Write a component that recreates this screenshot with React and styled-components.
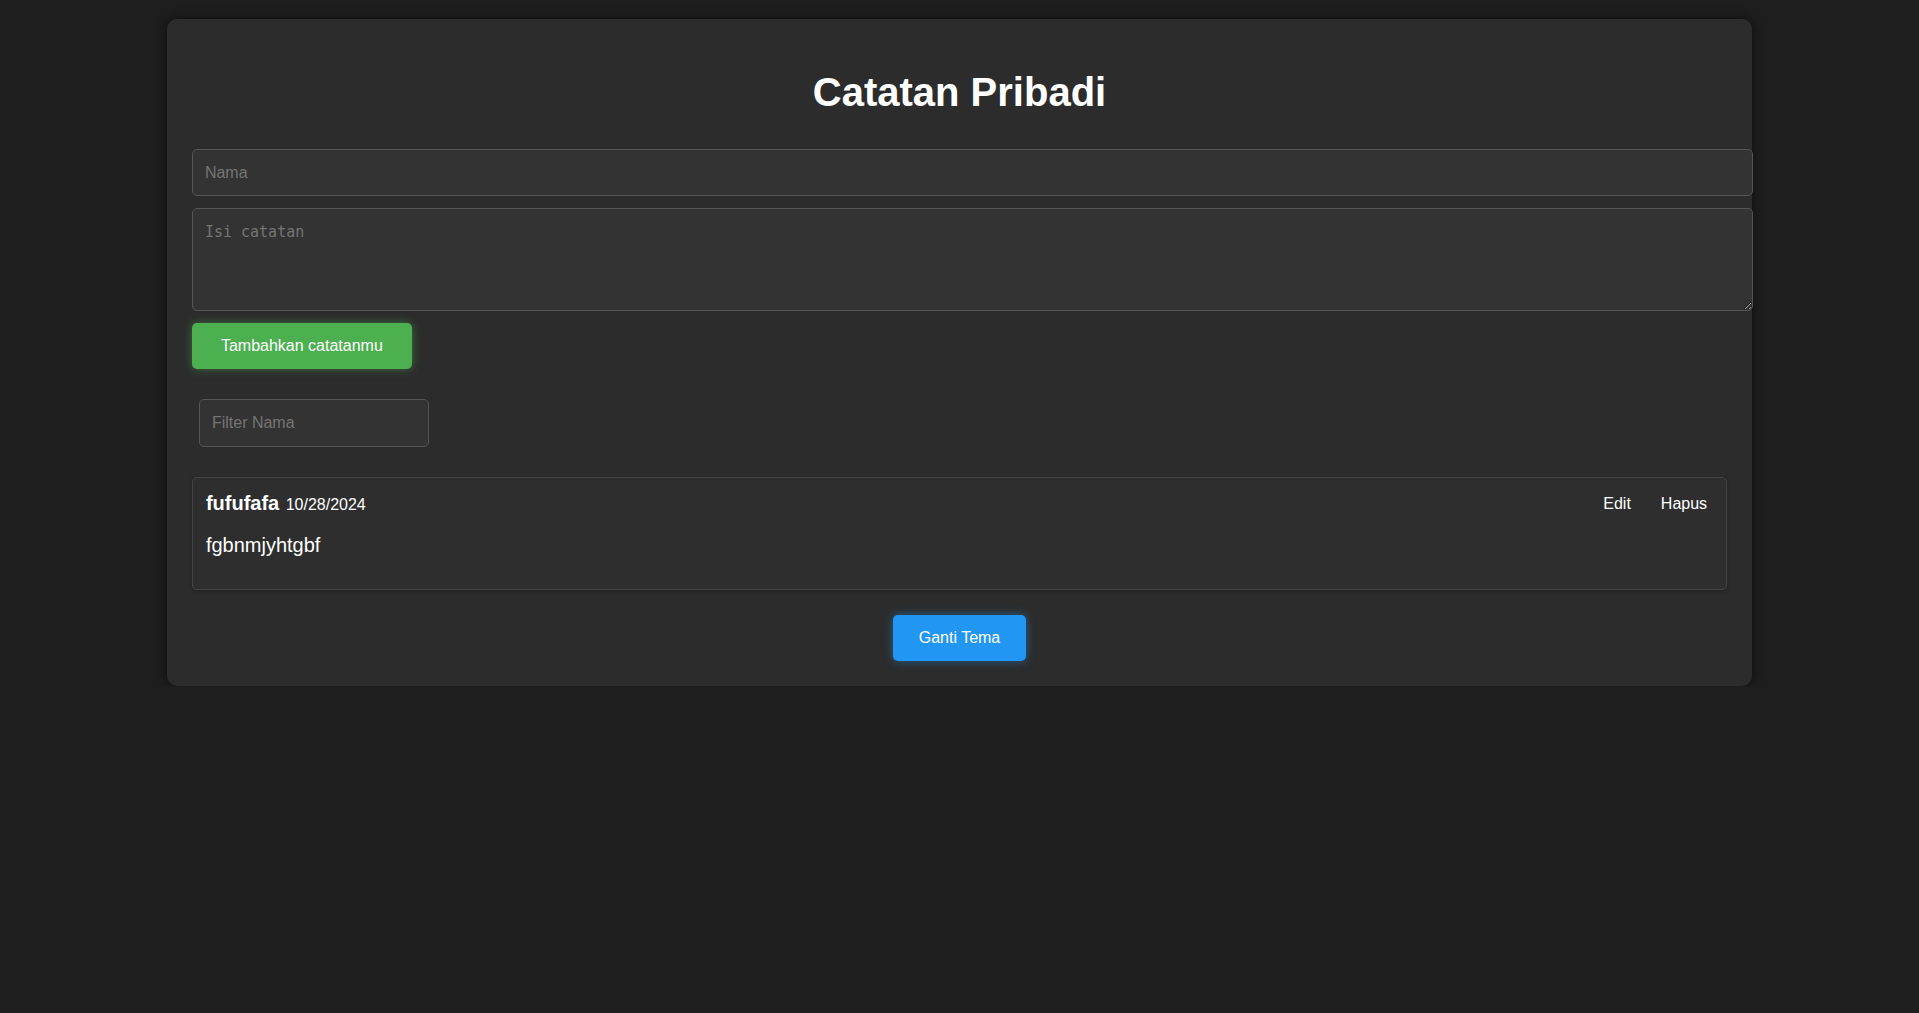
import React, { useState } from "react";
import styled, { createGlobalStyle } from "styled-components";

const GlobalStyle = createGlobalStyle`
  html, body {
    background-color: #1e1e1e;
  }
  body {
    margin: 0;
    font-family: "Liberation Sans", Arial, sans-serif;
    color: #ffffff;
  }
`;

const initialNotes = [
  { id: 1, name: "fufufafa", date: "10/28/2024", body: "fgbnmjyhtgbf" },
];

function App() {
  const [notes] = useState(initialNotes);
  const [filter, setFilter] = useState("");

  const shown = notes.filter((n) =>
    n.name.toLowerCase().includes(filter.toLowerCase())
  );

  return (
    <>
      <GlobalStyle />
      <Container>
        <Title>Catatan Pribadi</Title>
        <NoteForm onSubmit={(e) => e.preventDefault()}>
          <TextInput type="text" placeholder="Nama" />
          <TextArea placeholder="Isi catatan" />
          <ActionButton type="submit" $color="76, 175, 80" $px={29}>
            Tambahkan catatanmu
          </ActionButton>
        </NoteForm>
        <FilterInput
          type="text"
          placeholder="Filter Nama"
          value={filter}
          onChange={(e) => setFilter(e.target.value)}
        />
        <NoteList>
          {shown.map((note) => (
            <NoteCard key={note.id}>
              <NoteHeader>
                <NoteMeta>
                  <NoteName>{note.name}</NoteName> <NoteDate>{note.date}</NoteDate>
                </NoteMeta>
                <NoteActions>
                  <TextButton>Edit</TextButton>
                  <TextButton>Hapus</TextButton>
                </NoteActions>
              </NoteHeader>
              <NoteBody>{note.body}</NoteBody>
            </NoteCard>
          ))}
        </NoteList>
        <Footer>
          <ActionButton $color="33, 150, 243" $px={26}>
            Ganti Tema
          </ActionButton>
        </Footer>
      </Container>
    </>
  );
}
export default App;

const Container = styled.div`
  width: 80vw;
  margin: 19px auto 0;
  padding: 25px;
  background-color: #2c2c2c;
  border-radius: 10px;
  box-shadow: 0 0 12px rgba(0, 0, 0, 0.6);
`;

const Title = styled.h1`
  margin: 26px 0 34px;
  font-size: 40px;
  font-weight: 700;
  text-align: center;
  color: #ffffff;
`;

const NoteForm = styled.form`
  display: flex;
  flex-direction: column;
  align-items: flex-start;
  gap: 12px;
`;

const fieldStyle = `
  background-color: #333333;
  border: 1px solid #555555;
  border-radius: 5px;
  color: #ffffff;
  outline: 0;
`;

const TextInput = styled.input`
  ${fieldStyle}
  width: 100%;
  box-sizing: content-box;
  padding: 13px 12px;
  font-family: "Liberation Sans", Arial, sans-serif;
  font-size: 16px;
  line-height: 19px;
  &::placeholder {
    color: #757575;
  }
`;

const TextArea = styled.textarea`
  ${fieldStyle}
  width: 100%;
  height: 77px;
  box-sizing: content-box;
  padding: 14px 12px 10px;
  font-family: "DejaVu Sans Mono", "Liberation Mono", monospace;
  font-size: 15px;
  &::placeholder {
    color: #757575;
  }
`;

const ActionButton = styled.button`
  border: none;
  border-radius: 5px;
  padding: 14px ${(p) => p.$px}px;
  font-family: "Liberation Sans", Arial, sans-serif;
  font-size: 16px;
  line-height: 18px;
  color: #ffffff;
  background-color: rgb(${(p) => p.$color});
  box-shadow: 0 0 10px rgba(${(p) => p.$color}, 0.5);
  cursor: pointer;
  &:hover {
    opacity: 0.9;
  }
`;

const FilterInput = styled.input`
  ${fieldStyle}
  display: block;
  width: 230px;
  box-sizing: border-box;
  margin: 30px 0 30px 7px;
  padding: 14px 12px;
  font-family: "Liberation Sans", Arial, sans-serif;
  font-size: 16px;
  line-height: 18px;
  &::placeholder {
    color: #757575;
  }
`;

const NoteList = styled.div`
  display: flex;
  flex-direction: column;
  gap: 12px;
`;

const NoteCard = styled.div`
  padding: 14px 13px 12px;
  background-color: #2e2e2e;
  border: 1px solid #444444;
  border-radius: 5px;
  box-shadow: 0 1px 4px rgba(0, 0, 0, 0.25);
`;

const NoteHeader = styled.div`
  display: flex;
  align-items: center;
  justify-content: space-between;
`;

const NoteMeta = styled.div`
  line-height: 23px;
`;

const NoteName = styled.strong`
  font-size: 20px;
  font-weight: 700;
`;

const NoteDate = styled.span`
  margin-left: 2px;
  font-size: 16px;
`;

const NoteActions = styled.div`
  display: flex;
  gap: 18px;
`;

const TextButton = styled.button`
  background: transparent;
  border: none;
  padding: 2px 6px;
  font-family: "Liberation Sans", Arial, sans-serif;
  font-size: 16px;
  line-height: 18px;
  color: #ffffff;
  cursor: pointer;
`;

const NoteBody = styled.p`
  margin: 18px 0 20px;
  font-size: 20px;
  line-height: 23px;
`;

const Footer = styled.div`
  display: flex;
  justify-content: center;
  margin-top: 25px;
`;
